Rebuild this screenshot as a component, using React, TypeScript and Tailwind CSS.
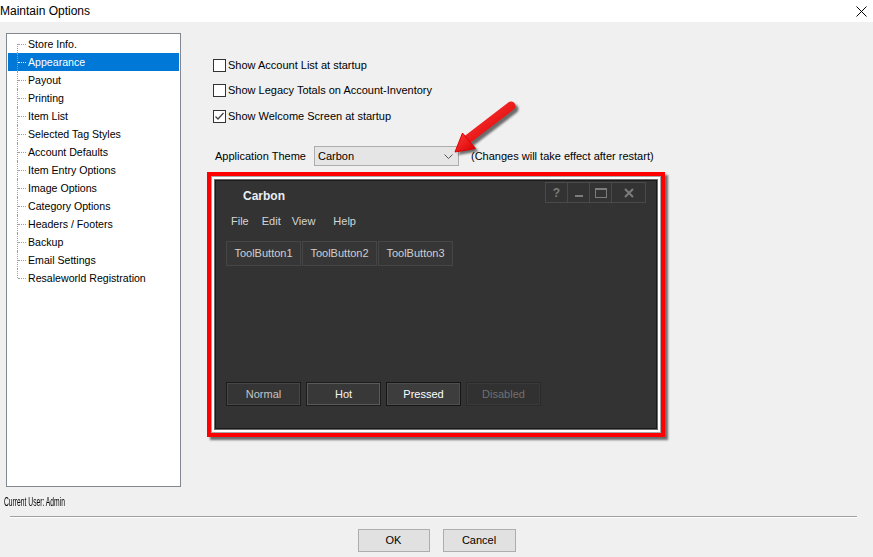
import React from 'react';

const treeItems = [
  'Store Info.',
  'Appearance',
  'Payout',
  'Printing',
  'Item List',
  'Selected Tag Styles',
  'Account Defaults',
  'Item Entry Options',
  'Image Options',
  'Category Options',
  'Headers / Footers',
  'Backup',
  'Email Settings',
  'Resaleworld Registration',
];

const TreeRow = ({ label, index, last }: { label: string; index: number; last: boolean }) => {
  const selected = label === 'Appearance';
  const dot = selected ? 'border-white' : 'border-[#a0a0a0]';
  return (
    <div className={`flex h-[18px] items-center ${selected ? 'bg-[#0078d7] text-white' : 'text-black'}`}>
      <div className="relative h-full w-[19px] shrink-0">
        {/* vertical connector */}
        <div
          className={`absolute left-[9px] border-l border-dotted border-[#a0a0a0] ${
            index === 0 ? 'top-[9px] bottom-0' : last ? 'top-0 h-[9px]' : 'top-0 bottom-0'
          }`}
        />
        <div className={`absolute left-[10px] top-[9px] w-[8px] border-t border-dotted ${dot}`} />
      </div>
      <span className="pl-[1px] pt-[2px] text-[10.6px]">{label}</span>
    </div>
  );
};

const CheckRow = ({ label, checked }: { label: string; checked?: boolean }) => (
  <div className="flex h-[20px] items-center pl-[6px]">
    <div className="flex h-[13px] w-[13px] items-center justify-center border border-[#333] bg-white">
      {checked && (
        <svg width="11" height="11" viewBox="0 0 11 11">
          <path d="M1.5 5.5 L4 8 L9.5 2" fill="none" stroke="#444" strokeWidth="1.3" />
        </svg>
      )}
    </div>
    <span className="ml-[2px]">{label}</span>
  </div>
);

const DarkButton = ({ label, kind }: { label: string; kind: 'normal' | 'hot' | 'pressed' | 'disabled' }) => {
  const styles = {
    normal: 'border-[#1c1c1c] bg-[#353535] text-[#c4c4c4] shadow-[inset_0_0_0_1px_#474747]',
    hot: 'border-[#1c1c1c] bg-[#383838] text-[#f2f2f2] shadow-[inset_0_0_0_1px_#5a5a5a]',
    pressed: 'border-[#151515] bg-[#3d3d3d] text-[#ffffff] shadow-[inset_0_0_0_1px_#4e4e4e]',
    disabled: 'border-[#2a2a2a] bg-[#313131] text-[#707070] shadow-[inset_0_0_0_1px_#3a3a3a]',
  }[kind];
  return (
    <div className={`flex h-[24px] w-[75px] items-center justify-center border ${styles}`}>{label}</div>
  );
};

const CarbonPreview = () => (
  <div className="h-[265px] w-[458px] border-[4px] border-[#ff0000] shadow-[3px_3px_2px_rgba(0,0,0,0.55)]">
    <div className="h-full w-full border border-[#a8a8a8] bg-white p-[2px]">
      <div className="h-full w-full border border-[#6a6a6a]">
        <div className="flex h-full w-full flex-col border border-[#1a1a1a] bg-[#333333] pl-[10px] pr-[10px]">
          {/* caption */}
          <div className="flex h-[24px] items-start justify-between pt-[1px]">
            <span className="mt-[5px] pl-[17px] text-[12px] font-bold text-[#e9eef5]">Carbon</span>
            <div className="flex h-[21px] border border-[#4a4a4a] text-[#7c7c7c]">
              <div className="flex w-[22px] items-center justify-center border-r border-[#4a4a4a] text-[12px] font-bold">?</div>
              <div className="flex w-[22px] items-end justify-center border-r border-[#4a4a4a] pb-[5px]">
                <div className="h-[2px] w-[8px] bg-[#7c7c7c]" />
              </div>
              <div className="flex w-[22px] items-center justify-center border-r border-[#4a4a4a]">
                <div className="h-[10px] w-[12px] border border-t-2 border-[#7c7c7c]" />
              </div>
              <div className="flex w-[33px] items-center justify-center">
                <svg width="10" height="10" viewBox="0 0 10 10">
                  <path d="M1 1 L9 9 M9 1 L1 9" stroke="#7c7c7c" strokeWidth="2" />
                </svg>
              </div>
            </div>
          </div>
          {/* menu */}
          <div className="mt-[8px] flex h-[16px] items-center pl-[5px] text-[#d6d6d6]">
            <span>File</span>
            <span className="ml-[13px]">Edit</span>
            <span className="ml-[11px]">View</span>
            <span className="ml-[18px]">Help</span>
          </div>
          {/* toolbar */}
          <div className="mt-[12px] flex gap-[1px]">
            {['ToolButton1', 'ToolButton2', 'ToolButton3'].map((t) => (
              <div
                key={t}
                className="flex h-[25px] w-[75px] items-center justify-center border border-[#464646] bg-[#363636] text-[#cfcfcf]"
              >
                {t}
              </div>
            ))}
          </div>
          <div className="mt-auto mb-[22px] flex gap-[5px]">
            <DarkButton label="Normal" kind="normal" />
            <DarkButton label="Hot" kind="hot" />
            <DarkButton label="Pressed" kind="pressed" />
            <DarkButton label="Disabled" kind="disabled" />
          </div>
        </div>
      </div>
    </div>
  </div>
);

const Arrow = () => (
  <svg className="pointer-events-none absolute left-[446px] top-[96px]" width="80" height="70" viewBox="446 96 80 70">
    <defs>
      <linearGradient id="rg" x1="0" y1="0" x2="1" y2="1">
        <stop offset="0" stopColor="#ff3a3a" />
        <stop offset="1" stopColor="#d80000" />
      </linearGradient>
      <filter id="blur" x="-20%" y="-20%" width="140%" height="140%">
        <feGaussianBlur stdDeviation="1.2" />
      </filter>
    </defs>
    <g transform="translate(3 3)" filter="url(#blur)" opacity="0.55">
      <line x1="468" y1="139" x2="511" y2="106" stroke="#000" strokeWidth="9" strokeLinecap="round" />
      <polygon points="455,152 462.5,133 475.5,148.5" fill="#000" />
    </g>
    <line x1="468" y1="139" x2="511" y2="106" stroke="url(#rg)" strokeWidth="9" strokeLinecap="round" />
    <polygon points="455,152 462.5,133 475.5,148.5" fill="url(#rg)" stroke="#e00000" strokeWidth="1" strokeLinejoin="round" />
  </svg>
);

export default function App() {
  return (
    <div
      className="relative h-[557px] w-[873px] overflow-hidden bg-[#f0f0f0] text-[11px] text-black"
      style={{ fontFamily: '"Liberation Sans", Arial, sans-serif' }}
    >
      {/* title bar */}
      <div className="flex h-[22px] items-center justify-between bg-white">
        <span className="text-[12px]">Maintain Options</span>
        <svg className="mr-[6px]" width="11" height="11" viewBox="0 0 11 11">
          <path d="M0.5 0.5 L10.5 10.5 M10.5 0.5 L0.5 10.5" stroke="#000" strokeWidth="1" />
        </svg>
      </div>

      <div className="flex pl-[6px] pt-[11px]">
        {/* tree */}
        <div className="h-[454px] w-[175px] border border-[#828790] bg-white p-[1px]">
          {treeItems.map((item, i) => (
            <TreeRow key={item} label={item} index={i} last={i === treeItems.length - 1} />
          ))}
        </div>

        {/* options */}
        <div className="ml-[26px] flex flex-col">
          <div className="mt-[22px]">
            <CheckRow label="Show Account List at startup" />
          </div>
          <div className="mt-[5px]">
            <CheckRow label="Show Legacy Totals on Account-Inventory" />
          </div>
          <div className="mt-[6px]">
            <CheckRow label="Show Welcome Screen at startup" checked />
          </div>
          <div className="mt-[20px] flex h-[20px] items-center pl-[8px]">
            <span className="w-[99px]">Application Theme</span>
            <div className="flex h-[20px] w-[145px] items-center justify-between border border-[#adadad] bg-[#e5e5e5] pl-[3px] pr-[5px]">
              <span>Carbon</span>
              <svg width="9" height="5" viewBox="0 0 9 5">
                <path d="M0.5 0.5 L4.5 4.5 L8.5 0.5" fill="none" stroke="#555" strokeWidth="1" />
              </svg>
            </div>
            <span className="ml-[12px]">(Changes will take effect after restart)</span>
          </div>
          <div className="mt-[6px]">
            <CarbonPreview />
          </div>
        </div>
      </div>

      <div className="mt-[8px] flex h-[14px] items-center pl-[4px]">
        <span className="origin-left scale-x-[0.56] whitespace-nowrap text-[12px]">Current User: Admin</span>
      </div>

      <div className="ml-[10px] mt-[7px] w-[847px] border-t border-b border-t-[#a0a0a0] border-b-white" />

      <div className="mt-[11px] flex justify-center gap-[13px]">
        <button className="h-[23px] w-[72px] border border-[#adadad] bg-[#e1e1e1] text-[11px]">OK</button>
        <button className="h-[23px] w-[73px] border border-[#adadad] bg-[#e1e1e1] text-[11px]">Cancel</button>
      </div>

      <Arrow />
    </div>
  );
}
